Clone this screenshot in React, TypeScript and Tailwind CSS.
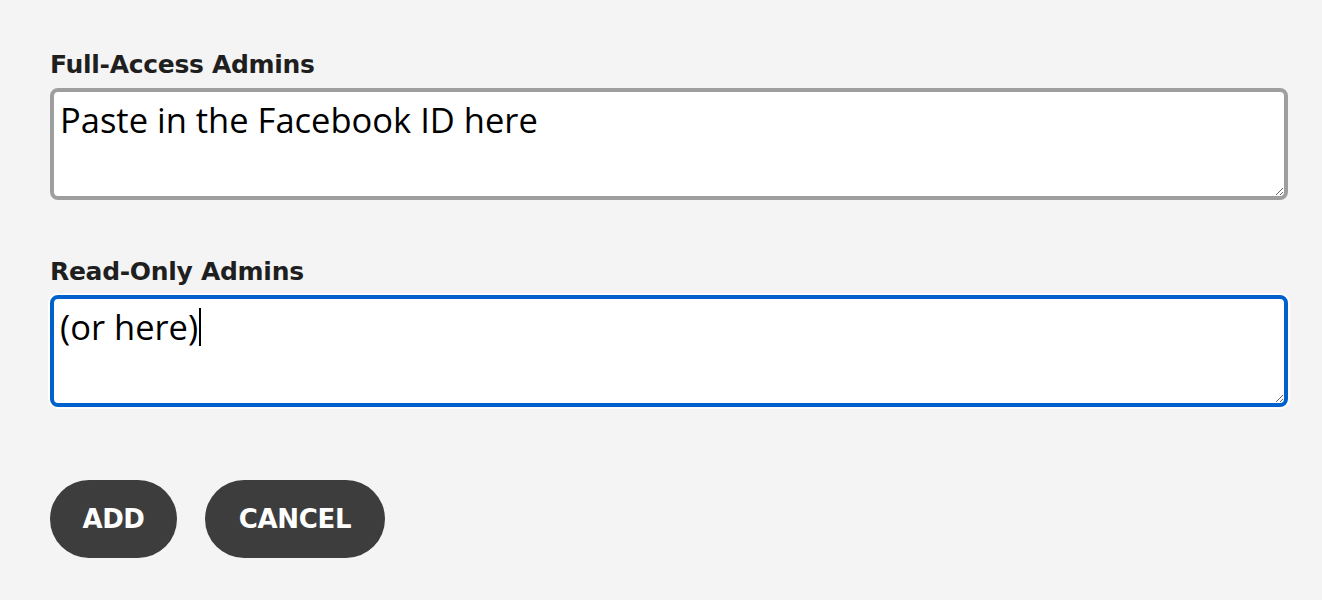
import { useEffect, useRef } from "react";

const labelFont = { fontFamily: "'DejaVu Sans', Lato, sans-serif" };
const fieldFont = { fontFamily: "'Open Sans', 'DejaVu Sans', sans-serif" };

function Field({
  label,
  value,
  focused,
}: {
  label: string;
  value: string;
  focused?: boolean;
}) {
  const ref = useRef<HTMLTextAreaElement>(null);

  useEffect(() => {
    if (focused && ref.current) {
      const el = ref.current;
      el.focus();
      el.setSelectionRange(value.length, value.length);
    }
  }, [focused, value]);

  return (
    <label className="flex flex-col gap-[8px]">
      <span className="text-[25px] font-bold leading-[30px] tracking-[-0.3px] text-[#1f1f1f]" style={labelFont}>
        {label}
      </span>
      <div className="relative">
        <textarea
          ref={ref}
          defaultValue={value}
          className={
            focused
              ? "block h-[112px] w-full rounded-[8px] border-4 border-[#0060cc] bg-white px-[6px] py-[5px] text-[34.5px] leading-[46px] text-black caret-transparent shadow-[0_0_0_2px_#ffffff] outline-none"
              : "block h-[112px] w-full rounded-[8px] border-4 border-[#9e9e9e] bg-white px-[6px] py-[5px] text-[34.5px] leading-[46px] text-black outline-none"
          }
          style={fieldFont}
        />
        {focused && (
          <div
            className="pointer-events-none absolute left-[10px] top-[9px] flex items-center text-[34.5px] leading-[46px]"
            style={fieldFont}
          >
            <span className="invisible">{value}</span>
            <span className="ml-[1px] h-[38px] w-[2px] bg-black" />
          </div>
        )}
      </div>
    </label>
  );
}

export default function App() {
  return (
    <div className="min-h-[600px] w-full bg-[#f4f4f4] px-[50px] pt-[50px]">
      <div className="flex w-[1238px] flex-col gap-[57px]">
        <Field label="Full-Access Admins" value="Paste in the Facebook ID here" />
        <Field label="Read-Only Admins" value="(or here)" focused />
      </div>
      <div className="mt-[73px] flex gap-[28px]" style={labelFont}>
        <button className="h-[78px] w-[127px] rounded-full bg-[#3d3d3d] text-[26px] font-bold tracking-[-0.5px] text-white">
          ADD
        </button>
        <button className="h-[78px] w-[180px] rounded-full bg-[#3d3d3d] text-[26px] font-bold tracking-[-0.3px] text-white">
          CANCEL
        </button>
      </div>
    </div>
  );
}
